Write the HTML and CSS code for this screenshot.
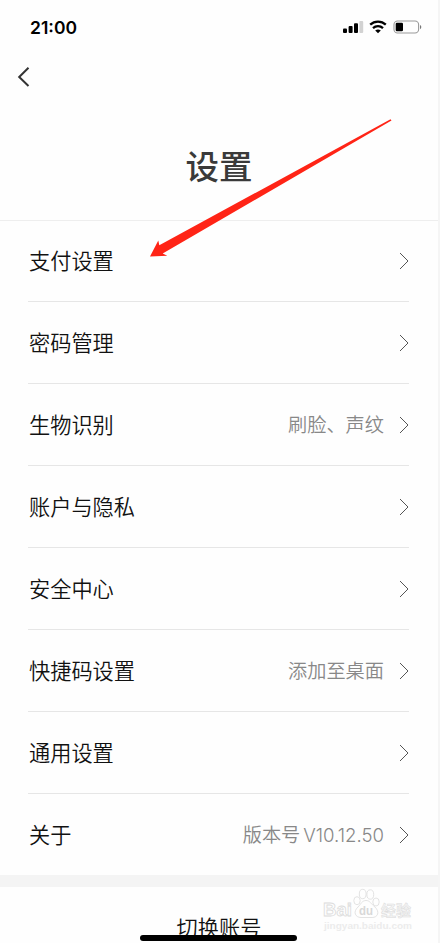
FILE: index.html
```
<!DOCTYPE html>
<html lang="zh-CN">
<head>
    <meta charset="UTF-8">
    <meta name="viewport" content="width=device-width, initial-scale=1.0">
    <title>设置</title>
    <link rel="stylesheet" href="styles.css">
</head>
<body>
    <div class="page">
        <div class="status-bar">
            <span class="time">21:00</span>
            <div class="status-icons">
                <svg class="signal" width="21" height="14" viewBox="0 0 21 14">
                    <rect x="0" y="8.5" width="4" height="4.5" rx="1"/>
                    <rect x="5.6" y="6" width="4" height="7" rx="1"/>
                    <rect x="11" y="3.2" width="4" height="9.8" rx="1"/>
                    <rect x="16.4" y="1" width="3.8" height="12" rx="1" fill="#d2d2d2"/>
                </svg>
                <svg class="wifi" width="18" height="14" viewBox="0 0 18 14">
                    <path d="M1.200 4.700a11.500 11.500 0 0 1 15.600 0M4 8.100a7.400 7.400 0 0 1 10 0" fill="none" stroke="#000" stroke-width="2.3"/>
                    <path d="M9 13.200l-2.800-2.600a4.300 4.300 0 0 1 5.600 0z"/>
                </svg>
                <svg class="battery" width="29" height="14" viewBox="0 0 29 14">
                    <rect x="1" y="1" width="24.600" height="12" rx="3.6" fill="none" stroke="#999" stroke-width="1.1"/>
                    <rect x="2.700" y="2.800" width="7.300" height="8.400" rx="1.2"/>
                    <path d="M27 5v4.200q1.300-.6 1.300-2.100T27 5z" fill="#777"/>
                </svg>
            </div>
        </div>

        <div class="header">
            <a class="back" href="#">
                <svg width="14" height="22" viewBox="0 0 14 22">
                    <path d="M11.500 1.800L2.200 11l9.300 9" fill="none" stroke="#333" stroke-width="2"/>
                </svg>
            </a>
            <h1>设置</h1>
        </div>

        <ul class="settings">
            <li><span class="name">支付设置</span><svg class="chevron" viewBox="0 0 10 18"><path d="M1 1l8 8-8 8"/></svg></li>
            <li><span class="name">密码管理</span><svg class="chevron" viewBox="0 0 10 18"><path d="M1 1l8 8-8 8"/></svg></li>
            <li><span class="name">生物识别</span><span class="value">刷脸、声纹</span><svg class="chevron" viewBox="0 0 10 18"><path d="M1 1l8 8-8 8"/></svg></li>
            <li><span class="name">账户与隐私</span><svg class="chevron" viewBox="0 0 10 18"><path d="M1 1l8 8-8 8"/></svg></li>
            <li><span class="name">安全中心</span><svg class="chevron" viewBox="0 0 10 18"><path d="M1 1l8 8-8 8"/></svg></li>
            <li><span class="name">快捷码设置</span><span class="value">添加至桌面</span><svg class="chevron" viewBox="0 0 10 18"><path d="M1 1l8 8-8 8"/></svg></li>
            <li><span class="name">通用设置</span><svg class="chevron" viewBox="0 0 10 18"><path d="M1 1l8 8-8 8"/></svg></li>
            <li><span class="name">关于</span><span class="value">版本号<span class="version">V10.12.50</span></span><svg class="chevron" viewBox="0 0 10 18"><path d="M1 1l8 8-8 8"/></svg></li>
        </ul>

        <div class="switch-account">切换账号</div>

        <svg class="arrow" width="244" height="140" viewBox="0 0 244 140">
            <path d="M1 138.500L9.300 122.500l1 4.800L241.500 1.200l1 1.200L13.700 135.500l4.600 2.300z"/>
        </svg>
        <div class="home-indicator"></div>
        <svg class="watermark" width="92" height="44" viewBox="0 0 92 44">
            <g class="paw">
                <ellipse cx="36" cy="12.700" rx="3.200" ry="4"/>
                <ellipse cx="41.700" cy="6" rx="3.400" ry="4.700"/>
                <ellipse cx="49.300" cy="6.500" rx="3.400" ry="4.700"/>
                <ellipse cx="55" cy="14" rx="3.200" ry="4"/>
                <path d="M45 12.500c-4 0-5 3.500-8 6.500-5.500 5-2.500 10.500 3 10.500h11c6 0 8-5.500 3-10.500-4-3-5-6.500-9-6.500z"/>
            </g>
            <text class="brand" x="2" y="28" textLength="29" lengthAdjust="spacingAndGlyphs">Bai</text>
            <text class="du" x="38" y="26.500" textLength="14" lengthAdjust="spacingAndGlyphs">du</text>
            <text class="brand-cn" x="60" y="27.500" textLength="30">经验</text>
            <text class="site" x="3" y="40.500" textLength="88" lengthAdjust="spacingAndGlyphs">jingyan.baidu.com</text>
        </svg>
    </div>
</body>
</html>
```
FILE: styles.css
```
body, html {
    margin: 0;
    padding: 0;
    height: 100%;
    background-color: #f5f5f5;
    font-family: "Noto Sans CJK SC", sans-serif;
    overflow: hidden;
}

.page {
    position: relative;
    width: 438px;
    height: 943px;
    background-color: #fefefe;
    overflow: hidden;
}

.status-bar {
    display: flex;
    justify-content: space-between;
    align-items: center;
    box-sizing: border-box;
    height: 54px;
    padding: 0 16px 0 30px;
}

.time {
    font-family: Inter, sans-serif;
    font-size: 17.5px;
    font-weight: 600;
    color: #000;
}

.status-icons {
    display: flex;
    align-items: center;
}

.wifi {
    margin-left: 5px;
    margin-right: 6px;
}

.header {
    box-sizing: border-box;
    height: 167px;
    padding-top: 12px;
    border-bottom: 1px solid #eee;
}

.back {
    display: block;
    width: 14px;
    height: 22px;
    margin-left: 17px;
}

.header h1 {
    margin: 52px 0 0;
    font-size: 33.5px;
    font-weight: 500;
    line-height: 50px;
    text-align: center;
    color: #3a3a3a;
}

.settings {
    margin: 0;
    padding: 0 29px 0 28px;
    list-style: none;
    border-bottom: 12px solid #f4f4f4;
}

.settings li {
    display: flex;
    align-items: center;
    height: 81px;
    border-bottom: 1px solid #e6e6e6;
}

.settings li:first-child {
    height: 80px;
}

.settings li:last-child {
    border-bottom: none;
}

.name {
    flex: 1;
    padding: 0 0 3px 1px;
    font-size: 21.2px;
    font-weight: 350;
    color: #111;
}

.value {
    margin-right: 15px;
    padding-bottom: 2px;
    font-size: 19.2px;
    font-weight: 350;
    color: #888;
}

.version {
    margin-left: 3px;
    font-family: Inter, sans-serif;
    font-size: 18.6px;
}

.chevron {
    width: 10px;
    height: 18px;
    fill: none;
    stroke: #555;
    stroke-width: 1;
}

.switch-account {
    padding-top: 24px;
    font-size: 21.2px;
    font-weight: 350;
    line-height: 32px;
    text-align: center;
    color: #111;
}

.arrow {
    position: absolute;
    left: 149px;
    top: 118px;
    fill: #ff2416;
}

.home-indicator {
    position: absolute;
    left: 140px;
    top: 935px;
    width: 157px;
    height: 6px;
    border-radius: 3px;
    background-color: #000;
}

.watermark {
    position: absolute;
    left: 321px;
    top: 888px;
    fill: #fefefe;
    stroke: #dcdcdc;
    stroke-width: .8;
    font-family: "Liberation Sans", "Noto Sans CJK SC", sans-serif;
    font-weight: bold;
}

.brand {
    font-size: 18px;
}

.du {
    font-size: 13px;
    fill: #d8d8d8;
    stroke: none;
}

.brand-cn {
    font-size: 15px;
    stroke-width: .5;
    fill: #f4f4f4;
}

.site {
    font-size: 9px;
    fill: #ececec;
    stroke: none;
}
```
